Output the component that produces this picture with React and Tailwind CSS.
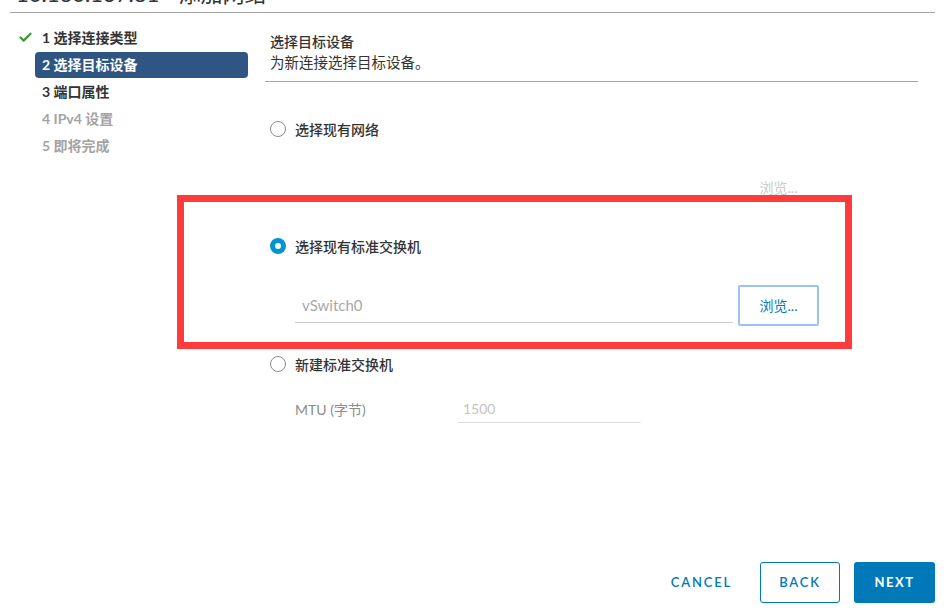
import { Check } from 'lucide-react'

const font = { fontFamily: "Lato, 'Noto Sans CJK SC', sans-serif" }

function Radio({ checked, label }) {
  return (
    <div className="flex items-center h-[20px]">
      {checked ? (
        <span className="w-[16px] h-[16px] rounded-full border-[5.5px] border-[#0094d2] bg-white" />
      ) : (
        <span className="w-[16px] h-[16px] rounded-full border border-[#8c8c8c] bg-white" />
      )}
      <span className="ml-[9px] text-[14px] text-[#333] font-medium">{label}</span>
    </div>
  )
}

const steps = [
  { n: 1, label: '选择连接类型', state: 'done' },
  { n: 2, label: '选择目标设备', state: 'active' },
  { n: 3, label: '端口属性', state: 'next' },
  { n: 4, label: 'IPv4 设置', state: 'off' },
  { n: 5, label: '即将完成', state: 'off' },
]

export default function App() {
  return (
    <div className="w-[951px] h-[615px] bg-white relative overflow-hidden flex flex-col" style={font}>
      <div className="ml-[10px] mr-[16px] h-[13px] border-b border-[#a6a6a6] overflow-hidden">
        <div className="text-[22px] leading-[26px] text-[#333] -mt-[19px] pl-[6px] whitespace-nowrap">
          10.160.137.81 - 添加网络
        </div>
      </div>

      <div className="flex flex-1">
        <nav className="w-[265px] pl-[18px] pt-[11px]">
          {steps.map((s) => (
            <div key={s.n} className="flex items-center h-[27px]">
              <div className="w-[17px] flex items-center">
                {s.state === 'done' && <Check size={15} strokeWidth={3.5} className="text-[#3c9a2d]" />}
              </div>
              <div
                className={
                  'w-[213px] h-[26px] flex items-center pl-[7px] rounded-[4px] text-[14px] font-bold ' +
                  (s.state === 'active'
                    ? 'bg-[#2f5682] text-white'
                    : s.state === 'off'
                    ? 'text-[#a3a3a3]'
                    : 'text-[#333]')
                }
              >
                {s.n} {s.label}
              </div>
            </div>
          ))}
        </nav>

        <main className="w-[653px] pt-[19px]">
          <div className="pl-[5px] border-b border-[#a6a6a6] pb-[8px]">
            <div className="text-[14px] leading-[20px] text-[#333] font-medium">选择目标设备</div>
            <div className="text-[14.5px] leading-[20px] text-[#333] mt-[1px]">为新连接选择目标设备。</div>
          </div>

          <div className="pl-[5px]">
            <div className="mt-[37px]">
              <Radio label="选择现有网络" />
            </div>

            <div className="mt-[28px] flex justify-end pr-[99px]">
              <div className="w-[81px] h-[41px] flex items-center justify-center text-[14px] text-[#c9c9c9]">
                浏览...
              </div>
            </div>

            <div className="mt-[28px]">
              <Radio checked label="选择现有标准交换机" />
            </div>

            <div className="mt-[29px] flex items-center pl-[25px]">
              <div className="w-[438px] h-[34px] flex items-center border-b border-[#cccccc] pl-[7px] text-[15px] text-[#a8a8a8]">
                vSwitch0
              </div>
              <button className="ml-[5px] w-[81px] h-[41px] border-2 border-[#9cc3f5] rounded-[2px] text-[14px] text-[#0079b8] flex items-center justify-center">
                浏览...
              </button>
            </div>

            <div className="mt-[28px]">
              <Radio label="新建标准交换机" />
            </div>

            <div className="mt-[20px] flex items-center pl-[25px] h-[30px]">
              <div className="w-[163px] text-[14px] text-[#8c8c8c]">MTU (字节)</div>
              <div className="w-[183px] h-[28px] flex items-center border-b border-[#dddddd] pl-[5px] text-[14px] text-[#c4c4c4]">
                1500
              </div>
            </div>
          </div>
        </main>
      </div>

      <div className="flex items-center justify-end pr-[16px] pb-[12px]">
        <button className="text-[13px] font-semibold tracking-[0.14em] text-[#0079b8] mr-[28px]">CANCEL</button>
        <button className="w-[80px] h-[41px] rounded-[3px] border border-[#0079b8] text-[13px] font-semibold tracking-[0.14em] text-[#0079b8] mr-[14px]">
          BACK
        </button>
        <button className="w-[81px] h-[41px] rounded-[3px] bg-[#0079b8] text-[13px] font-bold tracking-[0.12em] text-white">
          NEXT
        </button>
      </div>

      <div className="absolute left-[177px] top-[195px] w-[675px] h-[154px] border-[7px] border-[#ff3b3b] pointer-events-none" />
    </div>
  )
}
